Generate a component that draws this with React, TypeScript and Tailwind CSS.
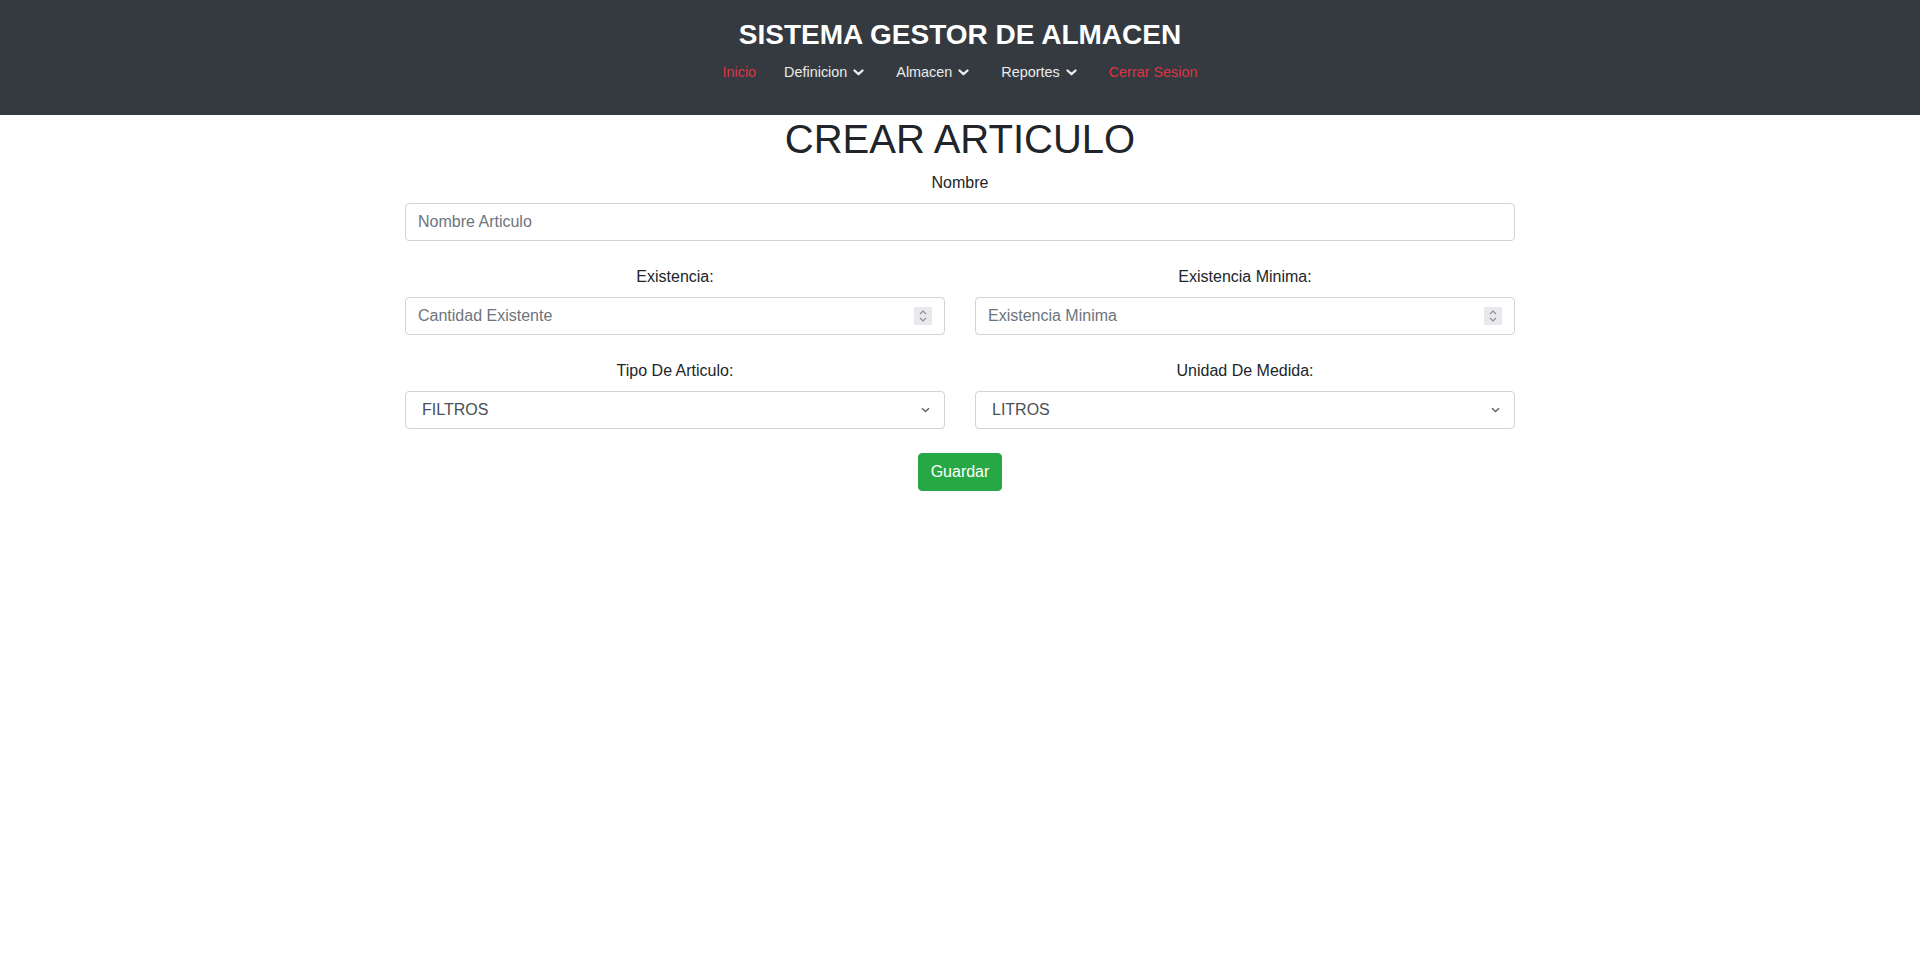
import { useState } from "react";

const NAV = [
  { label: "Inicio", red: true, drop: false },
  { label: "Definicion", red: false, drop: true },
  { label: "Almacen", red: false, drop: true },
  { label: "Reportes", red: false, drop: true },
  { label: "Cerrar Sesion", red: true, drop: false },
];

function Chevron() {
  return (
    <svg width="11" height="7" viewBox="0 0 11 7" className="ml-[6px]">
      <polyline points="1.5,1.5 5.5,5.2 9.5,1.5" fill="none" stroke="currentColor" strokeWidth="2.3" strokeLinecap="round" strokeLinejoin="round" />
    </svg>
  );
}

// fake spin buttons (chrome only paints them on hover)
function Spinner() {
  return (
    <div className="pointer-events-none absolute right-[13px] top-1/2 flex h-[18px] w-[18px] -translate-y-1/2 flex-col items-center justify-center gap-[2px] bg-[#e9e9ed]">
      <svg width="8" height="5" viewBox="0 0 8 5">
        <polyline points="1,4 4,1 7,4" fill="none" stroke="#8a8a8f" strokeWidth="1.1" />
      </svg>
      <svg width="8" height="5" viewBox="0 0 8 5">
        <polyline points="1,1 4,4 7,1" fill="none" stroke="#8a8a8f" strokeWidth="1.1" />
      </svg>
    </div>
  );
}

const inputCls =
  "block h-[38px] w-full rounded-[4px] border border-[#ced4da] bg-white px-3 py-[6px] text-[16px] leading-6 text-[#495057] placeholder:text-[#6c757d] outline-none";

function Label({ children }: { children: React.ReactNode }) {
  return <label className="mb-2 block text-center text-[16px] leading-6 text-[#212529]">{children}</label>;
}

function Select({ value, onChange, options }: { value: string; onChange: (v: string) => void; options: string[] }) {
  return (
    <div className="relative">
      <select value={value} onChange={(e) => onChange(e.target.value)} className={`${inputCls} appearance-none pl-4`}>
        {options.map((o) => (
          <option key={o}>{o}</option>
        ))}
      </select>
      <svg width="9" height="6" viewBox="0 0 9 6" className="pointer-events-none absolute right-[15px] top-1/2 -translate-y-1/2">
        <polyline points="1,1.2 4.5,4.6 8,1.2" fill="none" stroke="#5f6368" strokeWidth="1.4" />
      </svg>
    </div>
  );
}

export default function App() {
  const [tipo, setTipo] = useState("FILTROS");
  const [unidad, setUnidad] = useState("LITROS");

  return (
    <div className="min-h-screen bg-white font-['Liberation_Sans',Arial,sans-serif]">
      <header className="flex h-[115px] flex-col items-center bg-[#343a40] pt-[18px]">
        <h3 className="text-[28px] font-bold leading-[1.2] text-white">SISTEMA GESTOR DE ALMACEN</h3>
        <nav className="mt-[2px] flex">
          {NAV.map((n, i) => (
            <a
              key={n.label}
              href="#"
              className={`flex items-center py-2 text-[14.4px] leading-[21px] ${i === 0 ? "pl-4 pr-[12px]" : "px-4"} ${
                n.red ? "text-[#dc3545]" : "text-white/90"
              }`}
            >
              {n.label}
              {n.drop && <Chevron />}
            </a>
          ))}
        </nav>
      </header>

      <main className="mx-auto w-[1110px]">
        <h1 className="mb-2 text-center text-[40px] leading-[48px] text-[#212529]">CREAR ARTICULO</h1>

        <div className="mb-6">
          <Label>Nombre</Label>
          <input type="text" placeholder="Nombre Articulo" className={inputCls} />
        </div>

        <div className="mb-6 grid grid-cols-2 gap-[30px]">
          <div>
            <Label>Existencia:</Label>
            <div className="relative">
              <input type="text" placeholder="Cantidad Existente" className={inputCls} />
              <Spinner />
            </div>
          </div>
          <div>
            <Label>Existencia Minima:</Label>
            <div className="relative">
              <input type="text" placeholder="Existencia Minima" className={inputCls} />
              <Spinner />
            </div>
          </div>
        </div>

        <div className="mb-6 grid grid-cols-2 gap-[30px]">
          <div>
            <Label>Tipo De Articulo:</Label>
            <Select value={tipo} onChange={setTipo} options={["FILTROS", "ACEITES", "REPUESTOS"]} />
          </div>
          <div>
            <Label>Unidad De Medida:</Label>
            <Select value={unidad} onChange={setUnidad} options={["LITROS", "UNIDADES", "GALONES"]} />
          </div>
        </div>

        <div className="flex justify-center">
          <button
            type="button"
            className="h-[38px] rounded-[4px] border border-[#28a745] bg-[#28a745] px-3 text-[16px] leading-6 text-white"
          >
            Guardar
          </button>
        </div>
      </main>
    </div>
  );
}
